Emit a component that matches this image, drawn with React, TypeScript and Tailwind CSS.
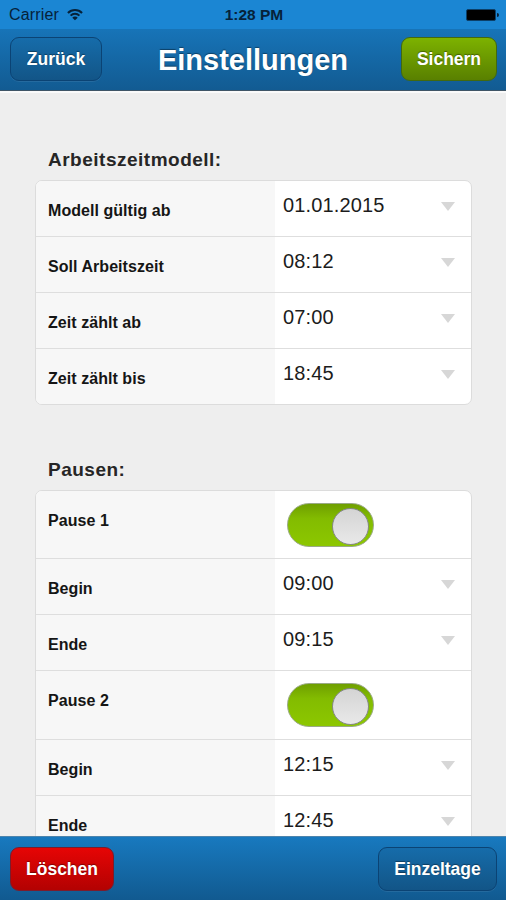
import { ReactNode } from 'react'
import clsx from 'clsx'

type RowData = {
  label: string
  value?: string
}

const workModel: RowData[] = [
  { label: 'Modell gültig ab', value: '01.01.2015' },
  { label: 'Soll Arbeitszeit', value: '08:12' },
  { label: 'Zeit zählt ab', value: '07:00' },
  { label: 'Zeit zählt bis', value: '18:45' },
]

// rows without a value are switches
const breaks: RowData[] = [
  { label: 'Pause 1' },
  { label: 'Begin', value: '09:00' },
  { label: 'Ende', value: '09:15' },
  { label: 'Pause 2' },
  { label: 'Begin', value: '12:15' },
  { label: 'Ende', value: '12:45' },
]

function StatusBar() {
  return (
    <div className="grid h-[29px] shrink-0 grid-cols-3 items-center bg-[#1b86d3] pr-[7px] pl-[9px] text-[#06223a]">
      <div className="flex items-center gap-[8px]">
        <span className="text-[16px] leading-none tracking-[0.15px]">Carrier</span>
        <svg className="h-[13px] w-[16px]" viewBox="0 0 17 13" fill="none" stroke="currentColor" strokeWidth="2.2">
          <path d="M1 4.8a10.6 10.6 0 0 1 15 0" />
          <path d="M3.8 7.7a6.6 6.6 0 0 1 9.4 0" />
          <path d="M8.5 12.6 5.6 9.9a4 4 0 0 1 5.8 0Z" fill="currentColor" stroke="none" />
        </svg>
      </div>
      <span className="text-center text-[15.5px] leading-none font-bold">1:28 PM</span>
      <div className="flex items-center justify-end gap-px">
        <div className="h-[12px] w-[30px] rounded-[2px] border border-[#0c3f68] bg-black" />
        <div className="h-[4px] w-[2px] rounded-r-full bg-[#06223a]" />
      </div>
    </div>
  )
}

function Button({ variant = 'blue', className, children }: { variant?: 'blue' | 'green' | 'red'; className?: string; children: ReactNode }) {
  return (
    <button
      type="button"
      className={clsx(
        'h-[44px] rounded-[9px] border bg-gradient-to-b pt-[2px] text-center text-[17.5px] leading-none font-bold text-white [text-shadow:0_-1px_1px_rgba(0,0,0,0.4)]',
        variant === 'blue' && 'border-[#0b4374] from-[#166caa] to-[#125587] shadow-[0_1px_0_rgba(255,255,255,0.08)]',
        variant === 'green' && 'border-[#42690f] from-[#7db200] to-[#598000]',
        variant === 'red' && 'border-[#7c1c2c] from-[#e60505] to-[#b30202]',
        className
      )}
    >
      {children}
    </button>
  )
}

function Toggle() {
  return (
    <div className="mt-[12px] ml-[12px] flex h-[44px] w-[87px] items-center justify-end rounded-full border border-[#9aaa86] bg-gradient-to-b from-[#6f9f00] via-[#83bc00] via-35% to-[#8cc700] pt-[3px] pr-[4px]">
      <div className="h-[37px] w-[37px] rounded-full border border-[#85878a] bg-gradient-to-b from-[#d4d4d4] to-[#e9e9e9]" />
    </div>
  )
}

function Row({ label, value }: RowData) {
  return (
    <div
      className={clsx(
        'flex border-b border-[#dedede] last:border-b-0',
        value ? 'h-[56px] last:h-[55px]' : 'h-[68.25px]'
      )}
    >
      <div className="w-[239px] shrink-0 bg-[#f7f7f7] pt-[20px] pl-[12px] text-[16px] leading-[20px] font-bold tracking-[0.05px] text-[#151515]">
        {label}
      </div>
      {value ? (
        <div className="flex flex-1 items-start justify-between pr-[16px] pl-[8px]">
          <span className="pt-[12px] text-[20px] leading-[24px] tracking-[0.15px] text-[#1c1c1c]">{value}</span>
          <svg className="mt-[21px] h-[9px] w-[14px]" viewBox="0 0 14 9">
            <path d="M0 0h14L7 9Z" fill="#d7d7d7" />
          </svg>
        </div>
      ) : (
        <Toggle />
      )}
    </div>
  )
}

function Section({ title, rows }: { title: string; rows: RowData[] }) {
  return (
    <section>
      <h2 className="mb-[9px] pl-[13px] text-[19px] leading-[22px] font-bold tracking-[0.5px] text-[#262626]">{title}</h2>
      <div className="overflow-hidden rounded-[7px] border border-[#dcdcdc] bg-white">
        {rows.map((row, i) => (
          <Row key={i} {...row} />
        ))}
      </div>
    </section>
  )
}

export default function App() {
  return (
    <div className="flex h-[900px] w-[506px] flex-col overflow-hidden bg-[#eeeeee] font-['Liberation_Sans',Arial,sans-serif]">
      <StatusBar />
      <header className="flex h-[62px] shrink-0 items-center justify-between border-b border-[#3f5566] bg-gradient-to-b from-[#1774b8] to-[#125b92] pr-[9px] pb-px pl-[10px]">
        <Button className="w-[92px]">Zurück</Button>
        <h1 className="pt-[3px] pl-[3px] text-[29px] leading-none font-bold text-white [text-shadow:0_-1px_1px_rgba(0,0,0,0.4)]">
          Einstellungen
        </h1>
        <Button variant="green" className="w-[96px]">
          Sichern
        </Button>
      </header>

      <main className="flex min-h-0 flex-1 flex-col gap-[54px] overflow-hidden border-t-2 border-[#fafafa] pt-[56px] pr-[34px] pl-[35px]">
        <Section title="Arbeitszeitmodell:" rows={workModel} />
        <Section title="Pausen:" rows={breaks} />
      </main>

      <footer className="flex h-[64px] shrink-0 items-center justify-between border-t border-[#4d84ac] bg-gradient-to-b from-[#1879bf] to-[#115a90] pt-[1px] pr-[9px] pl-[10px]">
        <Button variant="red" className="w-[104px]">
          Löschen
        </Button>
        <Button className="w-[119px]">Einzeltage</Button>
      </footer>
    </div>
  )
}
